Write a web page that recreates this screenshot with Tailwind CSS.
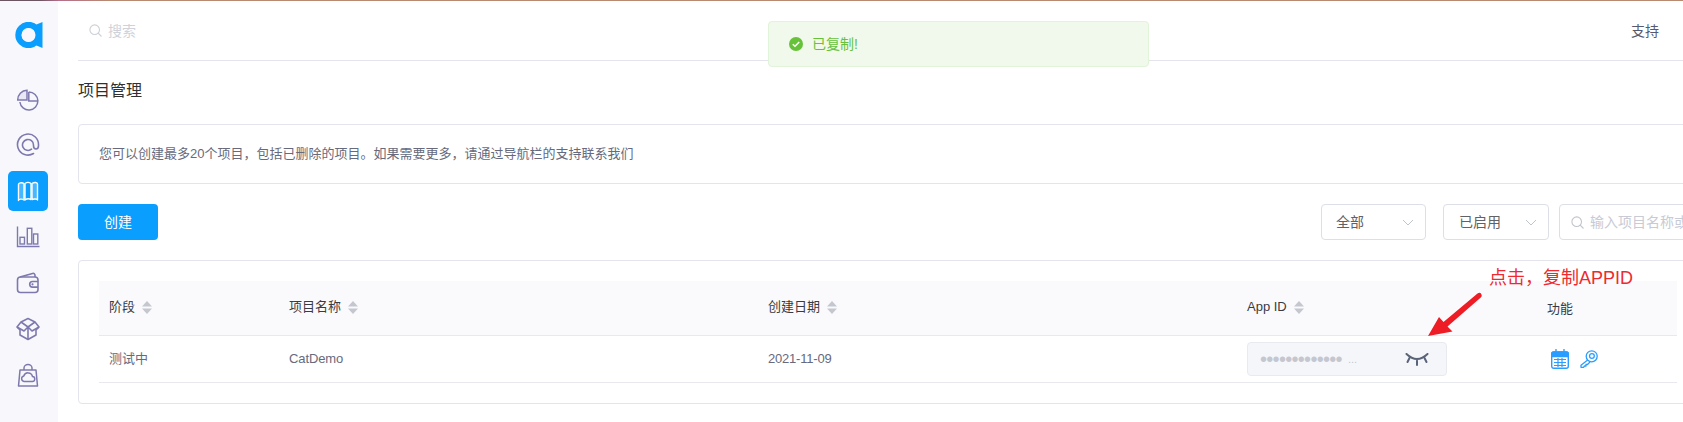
<!DOCTYPE html>
<html lang="zh">
<head>
<meta charset="utf-8">
<title>项目管理</title>
<script src="https://cdn.jsdelivr.net/npm/@tailwindcss/browser@4"></script>
</head>
<body class="overflow-hidden bg-white">
<div class="relative h-[422px] w-[1683px] overflow-hidden font-['Liberation_Sans','Noto_Sans_CJK_SC',sans-serif] text-[13px] text-[#666a7c]">
  <div class="h-px w-full bg-[linear-gradient(90deg,#6d5560_0,#6d5560_40px,#b5708a_60px,#b98a70_110px,#b98a70_100%)]"></div>
  <div class="flex h-[421px]">
    <aside class="flex w-[58px] shrink-0 flex-col items-start bg-[#f8f8fc] pl-2">
      <svg class="mt-[21px] ml-[7px] shrink-0" width="28" height="26" viewBox="0 0 28 26">
        <circle cx="13.5" cy="13" r="10" fill="none" stroke="#0a9fff" stroke-width="6.4"/>
        <path d="M19 3.5 27.5 0V26L19 22.5Z" fill="#0a9fff"/>
        <circle cx="13.5" cy="13" r="7" fill="#f8f8fc"/>
      </svg>
      <nav class="mt-[31px] flex flex-col gap-[6px]">
        <div class="flex h-10 w-10 items-center justify-center">
          <svg width="24" height="24" viewBox="0 0 24 24" fill="none" stroke="#7d79ae" stroke-width="1.5"><path d="M12.8 5a9 9 0 1 1-8.9 10"/><path d="M12.8 5v9h9"/><path d="M11 3.2A9.5 9.5 0 0 0 1.7 13H11Z" fill="#e9e8f4"/></svg>
        </div>
        <div class="flex h-10 w-10 items-center justify-center">
          <svg width="24" height="24" viewBox="0 0 24 24" fill="none" stroke="#7d79ae" stroke-width="1.6" stroke-linecap="round"><path d="M17.5 20.5A10.5 10.5 0 1 1 22.5 12v.8c0 2-1 3.2-2.5 3.2s-2.5-1.2-2.5-3.2V12a5.5 5.5 0 1 0-2 4.2"/></svg>
        </div>
        <div class="flex h-10 w-10 items-center justify-center rounded-[5px] bg-[#0a9fff]">
          <svg width="24" height="24" viewBox="0 0 24 24" fill="none" stroke="#fff" stroke-width="1.4" stroke-linejoin="round"><path d="M2.5 5.5C2.5 4 5.500 3 8 4.500V21C6 19.500 2.500 20 2.500 21.500Z" fill="#ffffff40"/><path d="M9 4.500C11 3 13 3 15 4.500V20.500C13 19.500 11 19.500 9 21Z"/><path d="M16 4.500C18 3 21.500 3 21.500 5V21C21.500 20 18 19.500 16 20.500Z" fill="#ffffff40"/></svg>
        </div>
        <div class="flex h-10 w-10 items-center justify-center">
          <svg width="24" height="24" viewBox="0 0 24 24" fill="none" stroke="#7d79ae" stroke-width="1.4"><path d="M1.500 1.500V21.500H23.500"/><rect x="4" y="12.300" width="4.500" height="6.700"/><rect x="11.300" y="3.300" width="4.500" height="15.700"/><rect x="17.500" y="9" width="4.300" height="10"/></svg>
        </div>
        <div class="flex h-10 w-10 items-center justify-center">
          <svg width="24" height="24" viewBox="0 0 24 24" fill="none" stroke="#7d79ae" stroke-width="1.6" stroke-linejoin="round"><rect x="1.500" y="6" width="20.500" height="15.500" rx="3"/><path d="M4 6 16.500 2.500q2.500-.5 2.500 2V6"/><path d="M22 10.500h-5.500a2.800 2.800 0 0 0 0 5.600H22"/><circle cx="16.500" cy="13.300" r="1.100" fill="#7d79ae" stroke="none"/></svg>
        </div>
        <div class="flex h-10 w-10 items-center justify-center">
          <svg width="24" height="24" viewBox="0 0 24 24" fill="none" stroke="#7d79ae" stroke-width="1.6" stroke-linejoin="round"><path d="M12 1.500 19 5l4 5-3 3v5l-8 4.500L4 18v-5l-3-3 4-5Z"/><path d="M5 5l7 5 7-5"/><path d="M1 10l7 4 4-4 4 4 7-4"/><path d="M12 10V22.500"/></svg>
        </div>
        <div class="flex h-10 w-10 items-center justify-center">
          <svg width="24" height="24" viewBox="0 0 24 24" fill="none" stroke="#7d79ae" stroke-width="1.500" stroke-linejoin="round"><path d="M4 7H20L21.500 23H2.500Z"/><path d="M8 7V5a4 3.500 0 0 1 8 0V7"/><path d="M8 18.500h8a2.500 2.500 0 0 0 .5-5 4.500 4.500 0 0 0-8.700-.5 2.800 2.800 0 0 0 .2 5.500Z"/></svg>
        </div>
      </nav>
    </aside>

    <main class="min-w-0 flex-1 overflow-hidden pl-5">
      <header class="flex h-[60px] items-center justify-between border-b border-[#e4e4ec] pr-6 pl-[11px]">
        <div class="flex items-center gap-[6px] text-sm text-[#d0d2da]">
          <svg width="13" height="13" viewBox="0 0 13 13" fill="none" stroke="#cdd0d8" stroke-width="1.100"><circle cx="5.700" cy="5.700" r="4.800"/><path d="M9.200 9.200 12.500 12.500"/></svg>
          <span>搜索</span>
        </div>
        <span class="text-sm text-[#555a70]">支持</span>
      </header>

      <div class="w-[1620px]">
        <h1 class="flex h-[63px] items-center pb-[3px] text-base font-normal text-[#303030]">项目管理</h1>

        <div class="flex h-[60px] items-center rounded-[4px] border border-[#e4e4ec] pl-5">您可以创建最多20个项目，包括已删除的项目。如果需要更多，请通过导航栏的支持联系我们</div>

        <div class="mt-5 flex h-9 items-center justify-between">
          <button class="h-9 w-20 rounded-[4px] bg-[#0a9fff] text-sm text-white">创建</button>
          <div class="flex items-center">
            <div class="flex h-9 w-[105px] items-center justify-between rounded-[4px] border border-[#dcdfe6] pr-[11px] pl-[14px] text-sm text-[#606266]">
              <span>全部</span>
              <svg width="12" height="7" viewBox="0 0 12 7" fill="none" stroke="#c0c4cc"><path d="M1 1l5 5 5-5"/></svg>
            </div>
            <div class="ml-[17px] flex h-9 w-[106px] items-center justify-between rounded-[4px] border border-[#dcdfe6] pr-[11px] pl-[15px] text-sm text-[#606266]">
              <span>已启用</span>
              <svg width="12" height="7" viewBox="0 0 12 7" fill="none" stroke="#c0c4cc"><path d="M1 1l5 5 5-5"/></svg>
            </div>
            <div class="ml-[10px] flex h-9 w-[139px] items-center gap-[6px] overflow-hidden rounded-[4px] border border-[#dcdfe6] pl-[11px] text-sm whitespace-nowrap text-[#c8cad4]">
              <svg class="shrink-0" width="13" height="13" viewBox="0 0 13 13" fill="none" stroke="#c0c4cc" stroke-width="1.100"><circle cx="5.700" cy="5.700" r="4.800"/><path d="M9.200 9.200 12.500 12.500"/></svg>
              <span>输入项目名称或App ID</span>
            </div>
          </div>
        </div>

        <section class="mt-5 rounded-[4px] border border-[#e4e4ec] px-5 pt-5 pb-5">
          <div class="grid h-[55px] grid-cols-[190px_479px_479px_300px_1fr] items-center border-b border-[#e8e8ef] bg-[#fafafc] pb-[2px] text-[#3a3a44]">
            <div class="flex items-center gap-[7px] pl-[10px]">
              <span>阶段</span>
              <svg width="10" height="13" viewBox="0 0 10 13" fill="#c4c7d0"><path d="M5 0l5 5.500H0Z"/><path d="M5 13l5-5.500H0Z"/></svg>
            </div>
            <div class="flex items-center gap-[7px]">
              <span>项目名称</span>
              <svg width="10" height="13" viewBox="0 0 10 13" fill="#c4c7d0"><path d="M5 0l5 5.500H0Z"/><path d="M5 13l5-5.500H0Z"/></svg>
            </div>
            <div class="flex items-center gap-[7px]">
              <span>创建日期</span>
              <svg width="10" height="13" viewBox="0 0 10 13" fill="#c4c7d0"><path d="M5 0l5 5.500H0Z"/><path d="M5 13l5-5.500H0Z"/></svg>
            </div>
            <div class="flex items-center gap-[7px]">
              <span>App ID</span>
              <svg width="10" height="13" viewBox="0 0 10 13" fill="#c4c7d0"><path d="M5 0l5 5.500H0Z"/><path d="M5 13l5-5.500H0Z"/></svg>
            </div>
            <div class="pt-[3px]">功能</div>
          </div>
          <div class="grid h-[47px] grid-cols-[190px_479px_479px_300px_1fr] items-center border-b border-[#e8e8ef]">
            <div class="pl-[10px]">测试中</div>
            <div class="tracking-[-0.1px]">CatDemo</div>
            <div class="tracking-[-0.2px]">2021-11-09</div>
            <div class="flex h-[34px] w-[200px] items-center rounded-[4px] border border-[#e8eaf0] bg-[#f5f6fa] pl-3">
              <span class="text-[20px] leading-none tracking-[-0.7px] text-[#c4c7d0]">•••••••••••••</span>
              <span class="ml-[6px] text-[11px] text-[#c4c7d0]">...</span>
              <svg class="mr-[17px] ml-auto" width="24" height="13" viewBox="0 0 24 13" fill="none" stroke="#5a6478" stroke-width="2" stroke-linecap="round"><path d="M1.500 1Q12 11 22.500 1"/><path d="M4.500 5 2.500 9"/><path d="M12 7.500V12"/><path d="M19.500 5l2 4"/></svg>
            </div>
            <div class="flex items-center gap-[11px]">
              <svg class="ml-1" width="18" height="20" viewBox="0 0 18 20" fill="none" stroke="#2a9dff" stroke-width="1.400"><rect x=".7" y="3" width="16.600" height="16.300" rx="2"/><path d="M.7 5a2 2 0 0 1 2-2h12.600a2 2 0 0 1 2 2v2.500H.7Z" fill="#2a9dff"/><path d="M5 .5v4M13 .5v4" stroke-linecap="round"/><path d="M3 10.500h12M3 13.500h12M3 16.500h12M7 9v9M11 9v9" stroke-width="1.200"/></svg>
              <svg width="18" height="18" viewBox="0 0 18 18" fill="none" stroke="#2a9dff" stroke-width="1.300" stroke-linejoin="round"><circle cx="11.700" cy="6.300" r="5.500"/><circle cx="11.900" cy="6" r="2.400"/><path d="M7.700 10 1 15.200V17.300H3.500L4.500 16H6V14.500H7.500L10 12"/></svg>
            </div>
          </div>
        </section>
      </div>
    </main>
  </div>

  <div class="absolute top-[21px] left-[768px] flex h-[46px] w-[381px] items-center gap-[9px] rounded-[4px] border border-[#e1f3d8] bg-[#f0f9eb] pl-5 text-sm text-[#67c23a]">
    <svg width="14" height="14" viewBox="0 0 14 14"><circle cx="7" cy="7" r="7" fill="#67c23a"/><path d="M3.800 7.200 6 9.300l4.200-4.400" fill="none" stroke="#fff" stroke-width="1.500"/></svg>
    <span>已复制!</span>
  </div>

  <div class="absolute top-[266px] left-[1489px] text-[18px] leading-6 whitespace-nowrap text-[#ee2a30]">点击，复制APPID</div>
  <svg class="absolute top-[290px] left-[1425px]" width="60" height="50" viewBox="0 0 60 50">
    <path d="M3 46 14 27l4.500 5L52.500 3.500q2.500-1.500 3.800.5t-.5 3.500L22.500 36.500l5 5Z" fill="#ee1c25"/>
  </svg>
</div>
</body>
</html>
